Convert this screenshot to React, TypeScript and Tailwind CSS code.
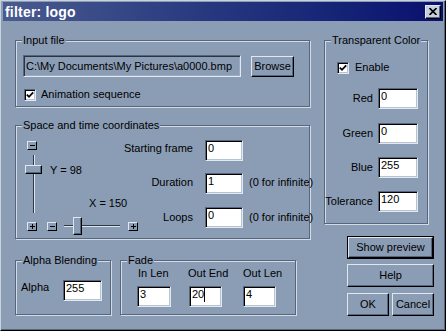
import React from 'react';

// Win9x style dialog, steel-blue theme
const raised =
  'border border-t-[#e0e7ef] border-l-[#e0e7ef] border-r-black border-b-black shadow-[inset_-1px_-1px_0_#56667c]';
const sunken =
  'border border-t-[#56667c] border-l-[#56667c] border-r-[#e3e9f0] border-b-[#e3e9f0] shadow-[inset_1px_1px_0_#000,inset_-1px_-1px_0_#b7c3d1]';

function Group({ label, className = '', children }: { label: string; className?: string; children?: React.ReactNode }) {
  return (
    <div className={`flex flex-col border border-[#56667c] shadow-[inset_1px_1px_0_#d3dce6,1px_1px_0_#d3dce6] ${className}`}>
      <div className="-mt-[7px] ml-[6px] w-fit px-[1px] leading-[13px] bg-[#8b9db5] whitespace-nowrap">{label}</div>
      {children}
    </div>
  );
}

function Field({ value, className = '', caret }: { value: string; className?: string; caret?: boolean }) {
  return (
    <div className={`flex h-[21px] bg-white pl-[2px] pt-[1px] leading-[13px] ${sunken} ${className}`}>
      <span>{value}</span>
      {caret && <span className="w-px h-[14px] bg-black" />}
    </div>
  );
}

function Check() {
  return (
    <div className={`flex w-[12px] h-[12px] items-center justify-center bg-white ${sunken}`}>
      <svg width="8" height="8" viewBox="0 0 8 8">
        <path d="M0.8 3.6 L3 5.8 L7.2 1.4" stroke="#000" strokeWidth="1.8" fill="none" />
      </svg>
    </div>
  );
}

function Btn({ children, className = '' }: { children: React.ReactNode; className?: string }) {
  return (
    <button className={`flex items-center justify-center leading-[13px] ${raised} ${className}`}>{children}</button>
  );
}

function Mini({ plus }: { plus?: boolean }) {
  return (
    <div className={`flex w-[10px] h-[9px] items-center justify-center border border-t-[#e0e7ef] border-l-[#e0e7ef] border-r-black border-b-black`}>
      <svg width="5" height="5" viewBox="0 0 5 5">
        <path d="M0 2.5 H5" stroke="#000" strokeWidth="1" />
        {plus && <path d="M2.5 0 V5" stroke="#000" strokeWidth="1" />}
      </svg>
    </div>
  );
}

export default function App() {
  return (
    <div className="w-[446px] h-[331px] overflow-hidden bg-[#8b9db5] px-[2px] pt-[1px] pb-[2px] border border-t-[#c9d3df] border-l-[#c9d3df] border-r-black border-b-black shadow-[inset_-1px_-1px_0_#56667c] font-['Liberation_Sans',Arial,sans-serif] text-[11px] text-black">
      {/* title bar */}
      <div className="flex h-[19px] items-center justify-between pl-[2px] pr-[2px] bg-linear-to-r from-[#4a5b8f] via-[#25357e] to-[#0a0e6e]">
        <span className="text-white font-bold text-[14px] tracking-[0.2px] leading-[16px]">filter: logo</span>
        <div className={`flex w-[16px] h-[14px] items-center justify-center bg-[#c6d0dc] ${raised}`}>
          <svg width="8" height="7" viewBox="0 0 8 7">
            <path d="M0.5 0 L7.5 7 M7.5 0 L0.5 7" stroke="#000" strokeWidth="1.6" />
          </svg>
        </div>
      </div>

      <div className="flex items-start">
        {/* left column */}
        <div className="ml-[12px] w-[295px] flex flex-col">
          <Group label="Input file" className="mt-[19px] h-[67px]">
            <div className="flex items-start mt-[8px] ml-[7px]">
              <div className={`flex h-[22px] w-[218px] items-center pl-[2px] ${sunken} shadow-[inset_1px_1px_0_#2a3442,inset_-1px_-1px_0_#9aaac0]`}>
                C:\My Documents\My Pictures\a0000.bmp
              </div>
              <Btn className="ml-[10px] mt-[1px] w-[43px] h-[21px]">Browse</Btn>
            </div>
            <div className="flex items-center mt-[11px] ml-[8px]">
              <Check />
              <span className="ml-[5px] leading-[13px]">Animation sequence</span>
            </div>
          </Group>

          <Group label="Space and time coordinates" className="mt-[18px] h-[114px]">
            <div className="flex items-start">
              {/* sliders */}
              <div className="ml-[11px] w-[111px] flex flex-col">
                <div className="mt-[9px]">
                  <Mini />
                </div>
                <div className="flex h-[67px]">
                  <div className="-ml-[2px] mt-[5px] w-[17px] flex flex-col items-center">
                    <div className="w-[2px] h-[10px] border-l border-l-[#2d3846] border-r border-r-[#dfe6ee]" />
                    <div className={`w-[17px] h-[9px] ${raised}`} />
                    <div className="w-[2px] h-[39px] border-l border-l-[#2d3846] border-r border-r-[#dfe6ee]" />
                  </div>
                  <div className="ml-[8px] flex flex-col">
                    <span className="mt-[14px] leading-[13px] whitespace-nowrap">Y = 98</span>
                    <span className="mt-[20px] ml-[39px] leading-[13px] whitespace-nowrap">X = 150</span>
                  </div>
                </div>
                <div className="flex h-[18px] items-center">
                  <Mini plus />
                  <div className="ml-[10px]">
                    <Mini />
                  </div>
                  <div className="ml-[7px] flex items-center">
                    <div className="w-[9px] h-[2px] border-t border-t-[#2d3846] border-b border-b-[#dfe6ee]" />
                    <div className={`w-[9px] h-[18px] ${raised}`} />
                    <div className="w-[38px] h-[2px] border-t border-t-[#2d3846] border-b border-b-[#dfe6ee]" />
                  </div>
                  <div className="ml-[8px]">
                    <Mini plus />
                  </div>
                </div>
              </div>

              {/* frame fields */}
              <div className="flex flex-col mt-[8px]">
                <div className="flex h-[21px] items-center">
                  <div className="w-[55px] flex justify-end whitespace-nowrap leading-[13px] -mt-[4px]">Starting frame</div>
                  <Field value="0" className="ml-[12px] w-[38px]" />
                </div>
                <div className="flex h-[21px] items-center mt-[12px]">
                  <div className="w-[55px] flex justify-end whitespace-nowrap leading-[13px] -mt-[2px]">Duration</div>
                  <Field value="1" className="ml-[12px] w-[38px]" />
                  <span className="ml-[6px] whitespace-nowrap leading-[13px] -mt-[2px]">(0 for infinite)</span>
                </div>
                <div className="flex h-[21px] items-center mt-[13px]">
                  <div className="w-[55px] flex justify-end whitespace-nowrap leading-[13px]">Loops</div>
                  <Field value="0" className="ml-[12px] w-[38px]" />
                  <span className="ml-[6px] whitespace-nowrap leading-[13px]">(0 for infinite)</span>
                </div>
              </div>
            </div>
          </Group>

          <div className="flex items-start mt-[21px]">
            <Group label="Alpha Blending" className="w-[96px] h-[55px]">
              <div className="flex items-start mt-[13px]">
                <span className="ml-[5px] w-[42px] mt-[1px] leading-[13px]">Alpha</span>
                <Field value="255" className="w-[39px]" />
              </div>
            </Group>
            <Group label="Fade" className="ml-[9px] w-[176px] h-[55px]">
              <div className="flex items-start">
                <div className="ml-[16px] w-[34px] flex flex-col">
                  <span className="pl-[1px] leading-[13px] whitespace-nowrap">In Len</span>
                  <Field value="3" className="mt-[6px] w-[34px]" />
                </div>
                <div className="ml-[18px] w-[33px] flex flex-col">
                  <span className="-ml-[1px] leading-[13px] whitespace-nowrap">Out End</span>
                  <Field value="20" caret className="mt-[6px] w-[33px]" />
                </div>
                <div className="ml-[21px] w-[33px] flex flex-col">
                  <span className="leading-[13px] whitespace-nowrap">Out Len</span>
                  <Field value="4" className="mt-[6px] w-[33px]" />
                </div>
              </div>
            </Group>
          </div>
        </div>

        {/* right column */}
        <div className="ml-[14px] mt-[19px] flex flex-col">
          <Group label="Transparent Color" className="w-[104px] h-[184px]">
            <div className="flex items-center ml-[12px] mt-[14px]">
              <Check />
              <span className="ml-[6px] leading-[13px]">Enable</span>
            </div>
            {[
              ['Red', '0', 'mt-[14px]'],
              ['Green', '0', 'mt-[14px]'],
              ['Blue', '255', 'mt-[13px]'],
              ['Tolerance', '120', 'mt-[13px]'],
            ].map(([l, v, m]) => (
              <div key={l} className={`flex h-[21px] items-center ${m}`}>
                <div className="w-[48px] flex justify-end whitespace-nowrap leading-[13px]">{l}</div>
                <Field value={v} className="ml-[5px] w-[40px]" />
              </div>
            ))}
          </Group>

          <div className="ml-[23px] mt-[12px] w-[87px] h-[23px] flex border border-black">
            <Btn className="flex-1">Show preview</Btn>
          </div>
          <Btn className="ml-[23px] mt-[5px] w-[87px] h-[23px]">Help</Btn>
          <div className="ml-[23px] mt-[6px] flex gap-[3px]">
            <Btn className="w-[42px] h-[23px]">OK</Btn>
            <Btn className="w-[42px] h-[23px]">Cancel</Btn>
          </div>
        </div>
      </div>
    </div>
  );
}
